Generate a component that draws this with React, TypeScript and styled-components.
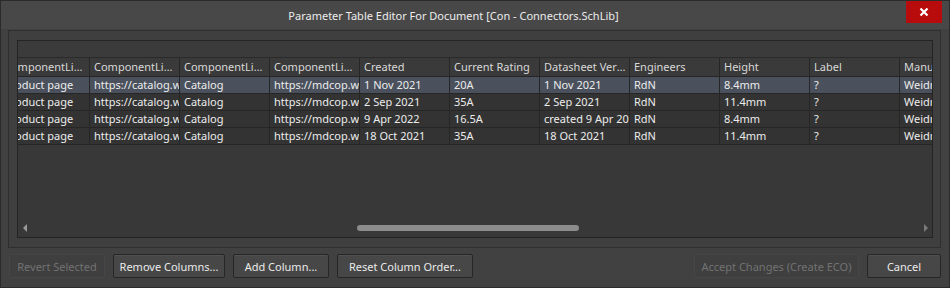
import React from "react";
import styled, { createGlobalStyle } from "styled-components";

const Global = createGlobalStyle`
  html, body { margin: 0; padding: 0; background: #3d3d3d; }
  * { box-sizing: border-box; }
`;

const FONT = `"Noto Sans", "Open Sans", Arial, sans-serif`;

const Window = styled.div`
  width: 950px;
  height: 288px;
  display: flex;
  flex-direction: column;
  background: #414141;
  border: 1px solid #2b2b2b;
  font-family: ${FONT};
  font-size: 11px;
  color: #e4e4e4;
  overflow: hidden;
`;

const TitleBar = styled.div`
  height: 28px;
  flex: none;
  display: grid;
  grid-template-columns: 1fr auto;
  align-items: start;
  background: #484848;
`;

const Title = styled.div`
  justify-self: center;
  padding-top: 7px;
  font-size: 11px;
  color: #ececec;
  white-space: nowrap;
`;

const CloseButton = styled.div`
  width: 36px;
  height: 22px;
  margin-right: 7px;
  background: #b80b0b;
  display: flex;
  align-items: center;
  justify-content: center;
`;

const Panel = styled.div`
  margin: 1px 8px 0 7px;
  height: 218px;
  flex: none;
  display: flex;
  border: 1px solid #2f2f2f;
  background: #3f3f3f;
  padding: 9px 7px 9px 8px;
`;

const Grid = styled.div`
  flex: 1;
  display: flex;
  flex-direction: column;
  border: 1px solid #242424;
  background: #383838;
  overflow: hidden;
`;

const GroupBand = styled.div`
  height: 17px;
  flex: none;
  border-bottom: 1px solid #2a2a2a;
  background: #3b3b3b;
`;

const Viewport = styled.div`
  flex: none;
  overflow: hidden;
`;

const Rows = styled.div`
  display: flex;
  flex-direction: column;
`;

const Row = styled.div<{ $kind: "header" | "normal" | "selected" }>`
  display: flex;
  border-bottom: 1px solid #262626;
  background: ${(p) =>
    p.$kind === "selected" ? "#4a515c" : p.$kind === "header" ? "#3a3a3a" : "#333333"};
  color: ${(p) => (p.$kind === "header" ? "#d8d8d8" : "#ececec")};
  height: ${(p) => (p.$kind === "header" ? "19px" : "17px")};
`;

const Cell = styled.div<{ $header?: boolean }>`
  flex: none;
  width: 90px;
  padding: 0 0 0 4px;
  border-right: 1px solid #262626;
  line-height: 16px;
  white-space: nowrap;
  overflow: hidden;
  text-overflow: ${(p) => (p.$header ? "ellipsis" : "clip")};
  padding-top: ${(p) => (p.$header ? "1px" : "0")};
`;

const Empty = styled.div`
  flex: 1;
`;

const ScrollBar = styled.div`
  height: 14px;
  flex: none;
  display: flex;
  align-items: center;
  padding: 0 4px 4px 5px;
`;

const Arrow = styled.div<{ $dir: "left" | "right" }>`
  flex: none;
  width: 0;
  height: 0;
  border-top: 4px solid transparent;
  border-bottom: 4px solid transparent;
  ${(p) =>
    p.$dir === "left"
      ? "border-right: 4px solid #9a9a9a;"
      : "border-left: 4px solid #7a7a7a;"}
`;

const Track = styled.div`
  flex: 1;
  display: flex;
  align-items: center;
  padding: 0 4px;
`;

const Thumb = styled.div`
  flex: none;
  height: 6px;
  border-radius: 3px;
  background: #8c8c8c;
`;

const ButtonBar = styled.div`
  display: flex;
  align-items: center;
  gap: 8px;
  margin: 6px 8px 0 8px;
`;

const Spacer = styled.div`
  flex: 1;
`;

const Button = styled.button<{ $w: number; $disabled?: boolean }>`
  flex: none;
  width: ${(p) => p.$w}px;
  height: 24px;
  font-family: ${FONT};
  font-size: 11px;
  padding: 0;
  border-radius: 2px;
  border: 1px solid ${(p) => (p.$disabled ? "#464646" : "#262626")};
  background: ${(p) => (p.$disabled ? "#3f3f3f" : "#474747")};
  color: ${(p) => (p.$disabled ? "#727272" : "#eaeaea")};
  box-shadow: ${(p) => (p.$disabled ? "none" : "inset 0 1px 0 #505050")};
`;

const headers = [
  "ComponentLink1Description",
  "ComponentLink1URL",
  "ComponentLink2Description",
  "ComponentLink2URL",
  "Created",
  "Current Rating",
  "Datasheet Version",
  "Engineers",
  "Height",
  "Label",
  "Manufacturer",
];

const rows = [
  ["Product page", "https://catalog.weidmueller.com", "Catalog", "https://mdcop.weidmueller.com", "1 Nov 2021", "20A", "1 Nov 2021", "RdN", "8.4mm", "?", "Weidmüller"],
  ["Product page", "https://catalog.weidmueller.com", "Catalog", "https://mdcop.weidmueller.com", "2 Sep 2021", "35A", "2 Sep 2021", "RdN", "11.4mm", "?", "Weidmüller"],
  ["Product page", "https://catalog.weidmueller.com", "Catalog", "https://mdcop.weidmueller.com", "9 Apr 2022", "16.5A", "created 9 Apr 2022", "RdN", "8.4mm", "?", "Weidmüller"],
  ["Product page", "https://catalog.weidmueller.com", "Catalog", "https://mdcop.weidmueller.com", "18 Oct 2021", "35A", "18 Oct 2021", "RdN", "11.4mm", "?", "Weidmüller"],
];

const scrollLeft = 18;
const thumb = { left: 326, width: 222 };

export default function App() {
  return (
    <>
      <Global />
      <Window>
        <TitleBar>
          <Title>Parameter Table Editor For Document [Con - Connectors.SchLib]</Title>
          <CloseButton>
            <svg width="10" height="10" viewBox="0 0 10 10">
              <path d="M1.5 1.5 L8.5 8.5 M8.5 1.5 L1.5 8.5" stroke="#fff" strokeWidth="2.2" />
            </svg>
          </CloseButton>
        </TitleBar>
        <Panel>
          <Grid>
            <GroupBand />
            <Viewport>
              <Rows style={{ marginLeft: -scrollLeft }}>
                <Row $kind="header">
                  {headers.map((h) => (
                    <Cell key={h} $header>
                      {h}
                    </Cell>
                  ))}
                </Row>
                {rows.map((r, i) => (
                  <Row key={i} $kind={i === 0 ? "selected" : "normal"}>
                    {r.map((c, j) => (
                      <Cell key={j}>{c}</Cell>
                    ))}
                  </Row>
                ))}
              </Rows>
            </Viewport>
            <Empty />
            <ScrollBar>
              <Arrow $dir="left" />
              <Track>
                <Thumb style={{ marginLeft: thumb.left, width: thumb.width }} />
              </Track>
              <Arrow $dir="right" />
            </ScrollBar>
          </Grid>
        </Panel>
        <ButtonBar>
          <Button $w={96} $disabled>Revert Selected</Button>
          <Button $w={112}>Remove Columns...</Button>
          <Button $w={96}>Add Column...</Button>
          <Button $w={136}>Reset Column Order...</Button>
          <Spacer />
          <Button $w={165} $disabled>Accept Changes (Create ECO)</Button>
          <Button $w={74}>Cancel</Button>
        </ButtonBar>
      </Window>
    </>
  );
}
